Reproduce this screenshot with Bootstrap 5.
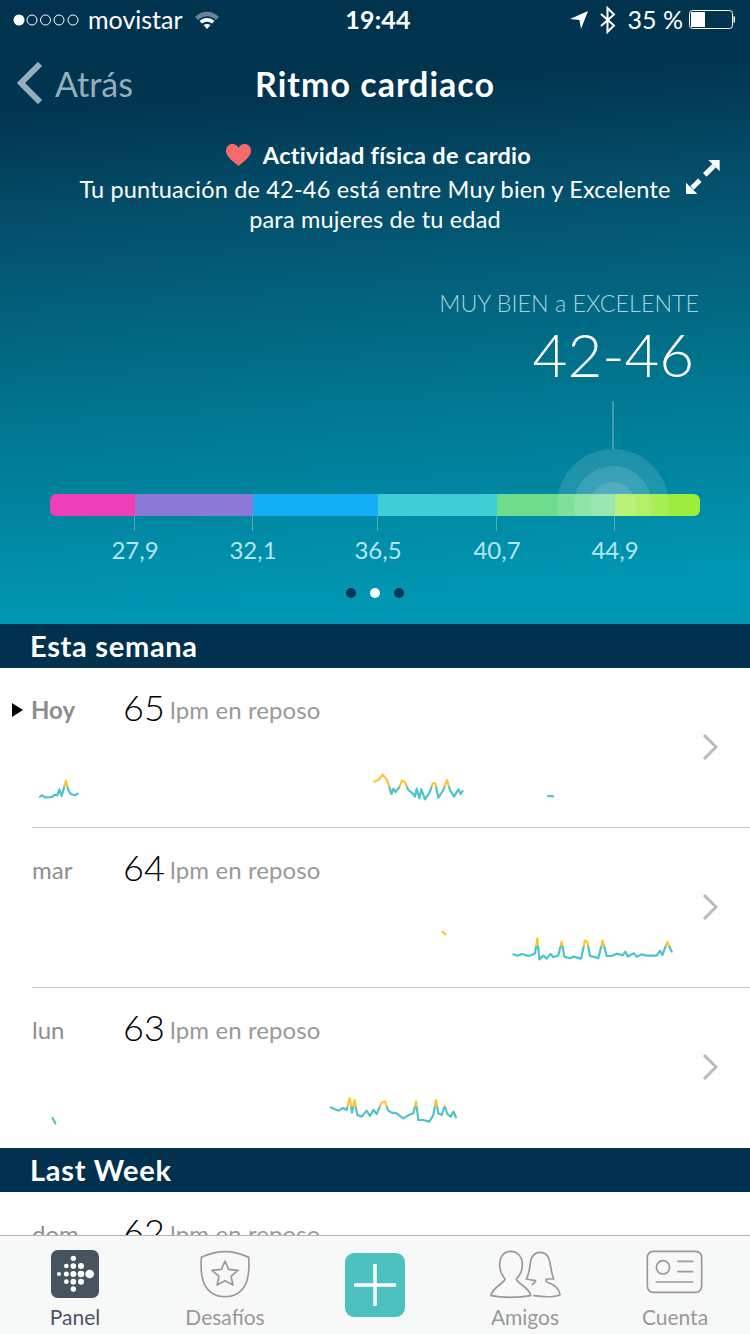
<!DOCTYPE html>
<html lang="es">
<head>
  <meta charset="UTF-8">
  <meta name="viewport" content="width=device-width, initial-scale=1">
  <title>Ritmo cardiaco</title>
  <link href="https://cdn.jsdelivr.net/npm/bootstrap@5.3.0/dist/css/bootstrap.min.css" rel="stylesheet">
  <style>
    html, body { height: 1334px; overflow: hidden; }
    body { font-family: "Lato", "Liberation Sans", sans-serif; background: #fff; color: #000; }
    .hero { height: 624px; color: #fff; background: linear-gradient(176deg, #01334f 0, #01344f 110px, #04506c 230px, #01758f 420px, #0097b3 624px); }
    .status-bar { height: 40px; padding: 0 7px 0 13px; font-size: 25px; }
    .status-side { flex: 1 1 0; gap: 7px; }
    .status-time { font-weight: 700; font-size: 25px; letter-spacing: .2px; }
    .status-right { gap: 11px; }
    .batt { margin: 0 8px 0 -5px; }
    .nav-line { height: 90px; padding-bottom: 4px; }
    .nav-back { flex: 1 1 0; color: #96aebb; font-size: 34px; gap: 12px; }
    .nav-back svg { margin-left: 17px; }
    .nav-title { font-size: 34px; font-weight: 700; letter-spacing: 1px; }
    .intro { position: relative; padding-top: 10px; text-align: center; height: 158px; }
    .intro-head { font-size: 23.5px; font-weight: 700; line-height: 30px; gap: 12px; letter-spacing: .3px; margin-left: 7px; }
    .intro-text { font-size: 23.5px; line-height: 30px; margin: 4px 0 0; letter-spacing: .18px; }
    .expand-ico { position: absolute; left: 686px; top: 30px; }
    .score-block { padding-right: 51px; text-align: right; height: 106px; }
    .score-label { font-size: 23.3px; line-height: 30px; color: #a5d3df; font-weight: 300; }
    .score-value { font-size: 60px; line-height: 68px; font-weight: 300; padding: 2px 5px 0 0; }
    .scale-wrap { position: relative; margin: 0 50px; padding-top: 100px; }
    .scale-bar { height: 22px; border-radius: 6px; overflow: hidden; }
    .tick-row { height: 15px; }
    .tick-cell { height: 15px; border-right: 1px solid rgba(255,255,255,.3); }
    .label-row { color: #b5e6ef; font-size: 24px; line-height: 30px; margin-top: 4px; }
    .label-cell { text-align: right; }
    .label-cell span { display: inline-block; transform: translateX(50%); }
    .marker-clip { position: absolute; left: 0; right: 0; top: 7px; height: 115px; overflow: hidden; }
    .marker-line { position: absolute; left: 562px; top: 0; width: 2px; height: 48px; background: rgba(255,255,255,.25); }
    .ripple { position: absolute; border-radius: 50%; background: rgba(255,255,255,.12); }
    .ripple-a { left: 507px; top: 48px; width: 112px; height: 112px; }
    .ripple-b { left: 524px; top: 65px; width: 78px; height: 78px; }
    .ripple-c { left: 540px; top: 81px; width: 46px; height: 46px; }
    .pager { gap: 14px; margin-top: 23px; }
    .pager-dot { width: 10px; height: 10px; border-radius: 50%; background: #01344f; }
    .pager-dot.is-on { background: #fff; }
    .week-head { height: 44px; background: #02314f; color: #fff; font-size: 29px; font-weight: 700; padding-left: 30px; line-height: 44px; letter-spacing: .7px; }
    .day-row { height: 160px; position: relative; }
    .day-row::after { content: ""; position: absolute; left: 32px; right: 0; bottom: 0; height: 1px; background: #c8c8c8; }
    .day-row.no-line::after { display: none; }
    .day-top { height: 92px; padding-top: 18px; }
    .day-name { width: 91px; margin-left: 32px; font-size: 24px; color: #8e8e8e; line-height: 48px; }
    .day-name.is-today { font-weight: 700; margin-left: 31px; width: 92px; }
    .today-mark { position: absolute; left: 12px; top: 35px; width: 0; height: 0; border-left: 11px solid #000; border-top: 7px solid transparent; border-bottom: 7px solid transparent; }
    .day-num { font-size: 36px; line-height: 42px; width: 47px; font-weight: 300; }
    .day-unit { font-size: 24px; color: #999; line-height: 48px; letter-spacing: .1px; }
    .chev { position: absolute; left: 700px; top: 64px; width: 20px; height: 30px; }
    .day-chart { width: 750px; height: 60px; display: block; }
    .day-chart polyline { fill: none; stroke-width: 6.5; stroke-linejoin: round; stroke-linecap: round; }
    .tabs { height: 99px; background: #f7f8f8; border-top: 1px solid #b4b4b4; }
    .tab-item { width: 150px; color: #999; font-size: 21px; line-height: 26px; }
    .tab-item svg { display: block; }
    .tab-ico { height: 68px; padding-top: 14px; }
    .tab-active { color: #4a5663; }
    .add-btn { width: 60px; height: 64px; margin-top: 17px; border-radius: 9px; background: #4dc1c0; }
  </style>
</head>
<body>
  <div class="hero">
    <div class="status-bar d-flex align-items-center">
      <div class="status-side d-flex align-items-center">
        <svg width="68" height="14" viewBox="0 0 68 14">
          <circle cx="6" cy="7" r="5.5" fill="#fff"/>
          <g fill="none" stroke="#fff" stroke-width="1">
            <circle cx="19" cy="7" r="5"/><circle cx="32.500" cy="7" r="5"/><circle cx="46" cy="7" r="5"/><circle cx="60" cy="7" r="5"/>
          </g>
        </svg>
        <span>movistar</span>
        <svg class="ms-1" width="26" height="20" viewBox="0 0 26 20">
          <path d="M1 7 C8 0 18 0 25 7 L22 10 C16 5 10 5 4 10Z" fill="#fff" opacity=".4"/>
          <path d="M5.500 11 C10 7 16 7 20.500 11 L18 13.500 C15 11 11 11 8 13.500Z" fill="#fff"/>
          <path d="M9.500 15 C11.500 13.500 14.500 13.500 16.500 15 L13 19Z" fill="#fff"/>
        </svg>
      </div>
      <div class="status-time">19:44</div>
      <div class="status-side status-right d-flex align-items-center justify-content-end">
        <svg width="18" height="18" viewBox="0 0 18 18"><path d="M0 8 L18 0 L11 18 L9.500 9Z" fill="#fff"/></svg>
        <svg width="18" height="28" viewBox="0 0 18 28"><path d="M2 8 L15 19.500 L8.500 26 V2 L15 8.500 L2 20" fill="none" stroke="#fff" stroke-width="2"/></svg>
        <span>35 %</span>
        <svg class="batt" width="46" height="20" viewBox="0 0 46 20">
          <rect x=".5" y=".5" width="43" height="18" rx="3" fill="none" stroke="#fff"/>
          <rect x="2" y="2" width="14" height="15" fill="#fff"/>
          <path d="M45 6.500 C46 7 46 12 45 12.500Z" fill="#fff" stroke="#fff"/>
        </svg>
      </div>
    </div>

    <div class="nav-line d-flex align-items-center">
      <div class="nav-back d-flex align-items-center">
        <svg width="26" height="42" viewBox="0 0 26 42"><path d="M23 2 L4 21 L23 40" fill="none" stroke="#96aebb" stroke-width="6"/></svg>
        <span>Atrás</span>
      </div>
      <div class="nav-title">Ritmo cardiaco</div>
      <div class="flex-grow-1" style="flex-basis:0"></div>
    </div>

    <div class="intro">
      <div class="intro-head d-flex justify-content-center align-items-center">
        <svg width="25" height="22" viewBox="0 0 25 22"><path d="M12.500 22 C5 16 0 12 0 6.500 C0 2.500 3 0 6.500 0 C9 0 11.500 1.500 12.500 4 C13.500 1.500 16 0 18.500 0 C22 0 25 2.500 25 6.500 C25 12 20 16 12.500 22Z" fill="#f56b6b"/></svg>
        <span>Actividad física de cardio</span>
      </div>
      <p class="intro-text">Tu puntuación de 42-46 está entre Muy bien y Excelente<br>para mujeres de tu edad</p>
      <svg class="expand-ico" width="34" height="34" viewBox="933 480 96 96">
        <path d="M996 480 H1028 V512Z M933 544 V576 H965Z" fill="#fff"/>
        <path d="M1012 496 L986 522 M950 559 L972 537" stroke="#fff" stroke-width="14"/>
      </svg>
    </div>

    <div class="score-block">
      <div class="score-label">MUY BIEN a EXCELENTE</div>
      <div class="score-value">42-46</div>
    </div>

    <div class="scale-wrap">
      <div class="scale-bar d-flex">
        <div style="width:85px;background:#ee3fb8"></div>
        <div style="width:118px;background:#8c78d6"></div>
        <div style="width:125px;background:#13aef5"></div>
        <div style="width:119px;background:#40cdd6"></div>
        <div style="width:118px;background:#6edc8c"></div>
        <div style="width:85px;background:#9bec3c"></div>
      </div>
      <div class="tick-row d-flex">
        <div class="tick-cell" style="width:85px"></div>
        <div class="tick-cell" style="width:118px"></div>
        <div class="tick-cell" style="width:125px"></div>
        <div class="tick-cell" style="width:119px"></div>
        <div class="tick-cell" style="width:118px"></div>
      </div>
      <div class="label-row d-flex">
        <div class="label-cell" style="width:85px"><span>27,9</span></div>
        <div class="label-cell" style="width:118px"><span>32,1</span></div>
        <div class="label-cell" style="width:125px"><span>36,5</span></div>
        <div class="label-cell" style="width:119px"><span>40,7</span></div>
        <div class="label-cell" style="width:118px"><span>44,9</span></div>
      </div>
      <div class="marker-clip">
        <div class="marker-line"></div>
        <div class="ripple ripple-a"></div>
        <div class="ripple ripple-b"></div>
        <div class="ripple ripple-c"></div>
      </div>
    </div>

    <div class="pager d-flex justify-content-center">
      <div class="pager-dot"></div>
      <div class="pager-dot is-on"></div>
      <div class="pager-dot"></div>
    </div>
  </div>

  <div class="week-head">Esta semana</div>

  <div class="day-row">
    <div class="today-mark"></div>
    <div class="day-top d-flex">
      <div class="day-name is-today">Hoy</div>
      <div class="day-num">65</div>
      <div class="day-unit">lpm en reposo</div>
    </div>
    <svg class="chev" viewBox="0 0 20 30"><path d="M4 3 L16 15 L4 27" fill="none" stroke="#bbb" stroke-width="3"/></svg>
    <svg class="day-chart" viewBox="0 210 2250 180">
      <defs>
        <linearGradient id="hr1" gradientUnits="userSpaceOnUse" x1="0" y1="288" x2="0" y2="292"><stop offset="0" stop-color="#fcc52c"/><stop offset="1" stop-color="#4cc3c4"/></linearGradient>
      </defs>
      <polyline stroke="url(#hr1)" points="120,320 127,316 135,322 155,321 165,314 172,316 178,298 185,318 198,272 205,300 212,312 225,316 233,311"/>
      <polyline stroke="url(#hr1)" points="1123,275 1135,270 1148,254 1160,268 1168,290 1174,312 1180,296 1186,306 1196,295 1206,272 1214,275 1225,300 1238,310 1245,320 1250,296 1258,325 1264,298 1275,328 1290,305 1298,280 1306,280 1315,323 1330,300 1341,270 1350,300 1362,320 1375,298 1382,312 1388,303"/>
      <polyline stroke="#4cc3c4" points="1644,318 1659,319"/>
    </svg>
  </div>

  <div class="day-row">
    <div class="day-top d-flex">
      <div class="day-name">mar</div>
      <div class="day-num">64</div>
      <div class="day-unit">lpm en reposo</div>
    </div>
    <svg class="chev" viewBox="0 0 20 30"><path d="M4 3 L16 15 L4 27" fill="none" stroke="#bbb" stroke-width="3"/></svg>
    <svg class="day-chart" viewBox="-1290 0 2250 180">
      <defs>
        <linearGradient id="hr2" gradientUnits="userSpaceOnUse" x1="0" y1="76" x2="0" y2="80"><stop offset="0" stop-color="#fcc52c"/><stop offset="1" stop-color="#4cc3c4"/></linearGradient>
      </defs>
      <polyline stroke="#fcc52c" points="38,35 45,43"/>
      <polyline stroke="url(#hr2)" points="250,103 262,107 275,102 295,108 305,105 315,100 322,55 328,118 340,107 350,116 362,102 370,112 385,106 395,65 403,110 420,115 430,110 453,116 465,62 472,65 480,108 498,112 505,115 518,62 530,108 545,108 560,101 578,106 586,95 594,110 602,104 612,100 620,110 635,103 650,107 680,107 690,92 697,105 712,66 725,95"/>
    </svg>
  </div>

  <div class="day-row no-line">
    <div class="day-top d-flex">
      <div class="day-name">lun</div>
      <div class="day-num">63</div>
      <div class="day-unit">lpm en reposo</div>
    </div>
    <svg class="chev" viewBox="0 0 20 30"><path d="M4 3 L16 15 L4 27" fill="none" stroke="#bbb" stroke-width="3"/></svg>
    <svg class="day-chart" viewBox="0 -30 2250 180">
      <defs>
        <linearGradient id="hr3" gradientUnits="userSpaceOnUse" x1="0" y1="48" x2="0" y2="52"><stop offset="0" stop-color="#fcc52c"/><stop offset="1" stop-color="#4cc3c4"/></linearGradient>
      </defs>
      <polyline stroke="#4cc3c4" points="158,84 166,100"/>
      <polyline stroke="url(#hr3)" points="992,52 1005,58 1015,62 1030,54 1040,60 1049,24 1056,68 1064,30 1072,75 1085,80 1100,62 1110,78 1120,60 1130,72 1145,38 1155,34 1165,62 1175,68 1190,70 1210,85 1225,76 1240,70 1248,35 1255,90 1270,90 1288,95 1300,75 1308,30 1315,70 1325,75 1334,48 1342,72 1352,80 1360,65 1368,82"/>
    </svg>
  </div>

  <div class="week-head">Last Week</div>

  <div class="day-row no-line">
    <div class="day-top d-flex">
      <div class="day-name">dom</div>
      <div class="day-num">62</div>
      <div class="day-unit">lpm en reposo</div>
    </div>
  </div>

  <div class="tabs fixed-bottom d-flex">
    <div class="tab-item tab-active d-flex flex-column align-items-center">
      <div class="tab-ico">
        <svg width="48" height="48" viewBox="153 150 144 144">
          <rect x="153" y="150" width="144" height="144" rx="20" fill="#47535f"/>
          <g fill="#fff">
            <circle cx="177" cy="222" r="6"/>
            <circle cx="199" cy="198" r="7"/><circle cx="199" cy="222" r="7.500"/><circle cx="199" cy="245" r="7"/>
            <circle cx="220" cy="175" r="8"/><circle cx="220" cy="198" r="8.500"/><circle cx="220" cy="222" r="9"/><circle cx="220" cy="245" r="8.500"/><circle cx="220" cy="267" r="8"/>
            <circle cx="243" cy="198" r="9"/><circle cx="243" cy="222" r="10"/><circle cx="243" cy="245" r="9"/>
            <circle cx="269" cy="222" r="13"/>
          </g>
        </svg>
      </div>
      <div>Panel</div>
    </div>
    <div class="tab-item d-flex flex-column align-items-center">
      <div class="tab-ico">
        <svg width="50" height="48" viewBox="600 150 150 144">
          <path d="M604 172 C650 150 700 150 746 172 C748 200 748 225 738 250 C725 278 700 290 675 290 C650 290 625 278 612 250 C602 225 602 200 604 172Z" fill="none" stroke="#999" stroke-width="5"/>
          <path d="M675 183 L686 208 L714 211 L693 229 L699 255 L675 242 L651 255 L657 229 L636 211 L664 208Z" fill="none" stroke="#999" stroke-width="5" stroke-linejoin="round"/>
        </svg>
      </div>
      <div>Desafíos</div>
    </div>
    <div class="tab-item d-flex justify-content-center">
      <div class="add-btn d-flex align-items-center justify-content-center">
        <svg width="42" height="42" viewBox="0 0 42 42"><path d="M1 21 H41 M21 1 V41" stroke="#fff" stroke-width="3.500" stroke-linecap="round"/></svg>
      </div>
    </div>
    <div class="tab-item d-flex flex-column align-items-center">
      <div class="tab-ico">
        <svg width="72" height="50" viewBox="340 148 216 150">
          <g fill="none" stroke="#999" stroke-width="5" stroke-linejoin="round" stroke-linecap="round">
            <path d="M405 152 C385 152 372 168 372 192 C372 212 380 225 388 235 C385 250 350 258 346 285 C380 292 430 292 465 285 C460 258 425 250 422 235 C432 225 440 212 440 192 C440 168 425 152 405 152Z"/>
            <path d="M475 285 C510 290 540 288 553 282 C550 262 530 250 515 245 C510 242 510 238 512 235 L534 235 C525 210 525 190 520 175 C515 160 505 155 493 155 C480 155 470 162 465 180 C462 200 462 215 452 235 L480 240 C478 245 475 248 470 252"/>
          </g>
        </svg>
      </div>
      <div>Amigos</div>
    </div>
    <div class="tab-item d-flex flex-column align-items-center">
      <div class="tab-ico">
        <svg width="58" height="46" viewBox="811 156 174 138">
          <g fill="none" stroke="#999" stroke-width="5">
            <rect x="815" y="160" width="163" height="123" rx="18"/>
            <circle cx="862" cy="208" r="20"/>
            <path d="M905 190 H953 M905 221 H953 M840 252 H953"/>
          </g>
        </svg>
      </div>
      <div>Cuenta</div>
    </div>
  </div>

  <script src="https://cdn.jsdelivr.net/npm/bootstrap@5.3.0/dist/js/bootstrap.bundle.min.js"></script>
</body>
</html>
